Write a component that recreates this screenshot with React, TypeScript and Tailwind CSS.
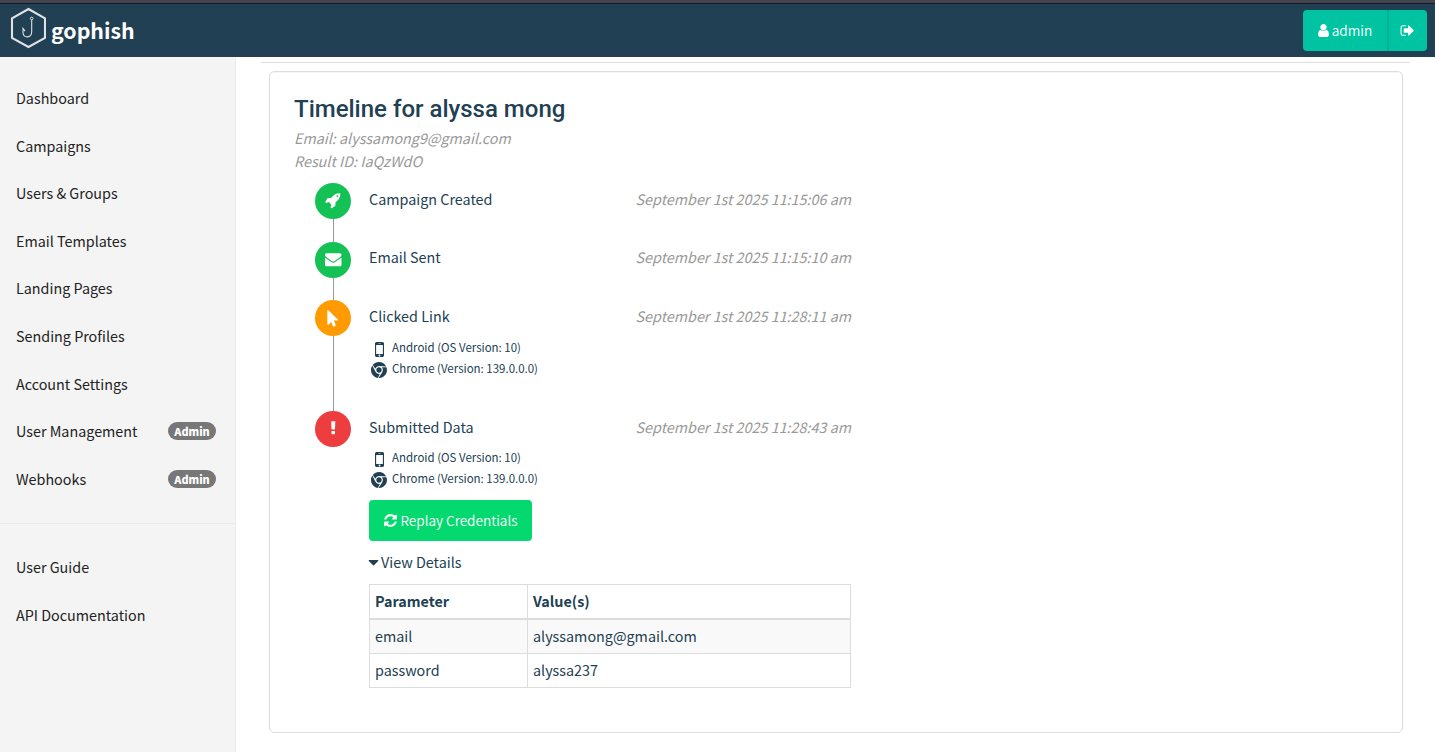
import type { ReactNode } from "react";

const paths = {
  user: "M1536 1399q0 109-62.5 187t-150.5 78h-854q-88 0-150.5-78t-62.5-187q0-85 8.5-160.5t31.5-152 58.5-131 94-89 134.5-34.5q131 128 313 128t313-128q76 0 134.5 34.5t94 89 58.5 131 31.5 152 8.5 160.5zm-256-887q0 159-112.5 271.5t-271.5 112.5-271.5-112.5-112.5-271.5 112.5-271.5 271.5-112.5 271.5 112.5 112.5 271.5z",
  signOut: "M704 1440q0 4 1 20t.5 26.5-3 23.5-10 19.5-20.5 6.5h-320q-119 0-203.5-84.5t-84.5-203.5v-704q0-119 84.5-203.5t203.5-84.5h320q13 0 22.5 9.5t9.5 22.5q0 4 1 20t.5 26.5-3 23.5-10 19.5-20.5 6.5h-320q-66 0-113 47t-47 113v704q0 66 47 113t113 47h312l11.5 1 11.5 3 8 5.5 7 9 2 13.5zm928-544q0 26-19 45l-544 544q-19 19-45 19t-45-19-19-45v-288h-448q-26 0-45-19t-19-45v-384q0-26 19-45t45-19h448v-288q0-26 19-45t45-19 45 19l544 544q19 19 19 45z",
  rocket: "M1440 448q0-40-28-68t-68-28-68 28-28 68 28 68 68 28 68-28 28-68zm224-288q0 249-75.5 430.5t-253.5 360.5q-81 80-195 176l-20 379q-2 16-16 26l-384 224q-7 4-16 4-12 0-23-9l-64-64q-13-14-8-32l85-276-281-281-276 85q-3 1-9 1-14 0-23-9l-64-64q-17-19-5-39l224-384q10-14 26-16l379-20q96-114 176-195 188-187 358-258t431-71q14 0 24 9.5t10 22.5z",
  envelope: "M1792 710v794q0 66-47 113t-113 47h-1472q-66 0-113-47t-47-113v-794q44 49 101 87 362 246 497 345 57 42 92.5 65.5t94.5 48 110 24.5h2q51 0 110-24.5t94.5-48 92.5-65.5q170-123 498-345 57-39 100-87zm0-294q0 79-49 151t-122 123q-376 261-468 325-10 7-42.5 31t-54 38.5-52 32.5-57.5 27-50 9h-2q-23 0-50-9t-57.5-27-52-32.5-54-38.5-42.5-31q-91-64-262-182.5t-205-142.5q-62-42-117-115.5t-55-136.5q0-78 41.5-130t118.5-52h1472q65 0 112.5 47t47.5 113z",
  pointer: "M1389 1043q31 30 14 69-17 40-59 40h-382l201 476q10 25 0 49t-34 35l-177 75q-25 10-49 0t-35-34l-191-452-312 312q-19 19-45 19-12 0-24-5-40-17-40-59v-1504q0-42 40-59 12-5 24-5 27 0 45 19z",
  exclamation: "M1088 1248v224q0 26-19 45t-45 19h-256q-26 0-45-19t-19-45v-224q0-26 19-45t45-19h256q26 0 45 19t19 45zm30-1056l-28 768q-1 26-20.5 45t-45.5 19h-256q-26 0-45.5-19t-20.5-45l-28-768q-1-26 17.5-45t44.5-19h320q26 0 44.5 19t17.5 45z",
  mobile: "M976 1408q0-33-23.5-56.5t-56.5-23.5-56.5 23.5-23.5 56.5 23.5 56.5 56.5 23.5 56.5-23.5 23.5-56.5zm208-160v-704q0-13-9.5-22.5t-22.5-9.5h-512q-13 0-22.5 9.5t-9.5 22.5v704q0 13 9.5 22.5t22.5 9.5h512q13 0 22.5-9.5t9.5-22.5zm-192-848q0-16-16-16h-160q-16 0-16 16t16 16h160q16 0 16-16zm288-16v1024q0 52-38 90t-90 38h-512q-52 0-90-38t-38-90v-1024q0-52 38-90t90-38h512q52 0 90 38t38 90z",
  chrome: "M893 0q240-2 451 120 232 134 352 372l-742-39q-160-9-294 74.5t-185 229.5l-276-424q128-159 311-245.5t383-87.5zm-747 405l337 663q72 143 211 217t293 45l-230 451q-212-33-385-157.5t-272.5-316-99.5-411.5q0-267 146-491zm1580 169q58 150 59.5 310.5t-48.5 306-153 272-246 209.5q-230 133-498 119l405-623q88-131 82.5-290.5t-106.5-277.5zm-830 20q125 0 213.5 88.5t88.5 213.5-88.5 213.5-213.5 88.5-213.5-88.5-88.5-213.5 88.5-213.5 213.5-88.5z",
  refresh: "M1639 1056q0 5-1 7-64 268-268 434.5t-478 166.5q-146 0-282.5-55t-243.5-157l-129 129q-19 19-45 19t-45-19-19-45v-448q0-26 19-45t45-19h448q26 0 45 19t19 45-19 45l-137 137q71 66 161 102t187 36q134 0 250-65t186-179q11-17 53-117 8-23 30-23h192q13 0 22.5 9.5t9.5 22.5zm25-800v448q0 26-19 45t-45 19h-448q-26 0-45-19t-19-45 19-45l138-138q-148-137-349-137-134 0-250 65t-186 179q-11 17-53 117-8 23-30 23h-199q-13 0-22.5-9.5t-9.5-22.5v-7q65-268 270-434.5t480-166.5q146 0 284 55.5t245 156.5l130-129q19-19 45-19t45 19 19 45z",
  caret: "M1408 704q0 26-19 45l-448 448q-19 19-45 19t-45-19l-448-448q-19-19-19-45t19-45 45-19h896q26 0 45 19t19 45z",
};

function Icon({ name, className }: { name: keyof typeof paths; className: string }) {
  return (
    <svg viewBox="0 0 1792 1792" fill="currentColor" className={`shrink-0 overflow-visible ${className}`}>
      <path d={paths[name]} />
    </svg>
  );
}

function Logo() {
  return (
    <svg viewBox="0 0 36 42" className="h-[42px] w-9 shrink-0" fill="none" stroke="#e0e2e4">
      <path d="M18.500 2L35 11.300V30.800L18.500 40L2 30.800V11.300Z" strokeWidth="2.100" />
      <circle cx="21.700" cy="11.400" r="1.300" strokeWidth="1" />
      <path d="M21.700 13V24.500C21.700 31.500 13 31.500 13 25.500V21.500L15 24.200" strokeWidth="1.100" />
    </svg>
  );
}

const nav: { label: string; admin?: boolean }[] = [
  { label: "Dashboard" },
  { label: "Campaigns" },
  { label: "Users & Groups" },
  { label: "Email Templates" },
  { label: "Landing Pages" },
  { label: "Sending Profiles" },
  { label: "Account Settings" },
  { label: "User Management", admin: true },
  { label: "Webhooks", admin: true },
];

function NavItem({ label, admin }: { label: string; admin?: boolean }) {
  return (
    <li className="flex h-[47.6px] items-center justify-between pr-[19px] pl-4">
      <a href="#" className="pb-px">{label}</a>
      {admin && (
        <span className="mt-[0.6px] flex h-[18px] w-12 items-center justify-center rounded-full bg-[#777] text-[10.8px] leading-none font-black text-white">
          Admin
        </span>
      )}
    </li>
  );
}

function Event({
  icon,
  iconClass,
  color,
  title,
  time,
  height,
  rowHeight = "h-[31px]",
  last,
  children,
}: {
  icon: keyof typeof paths;
  iconClass: string;
  color: string;
  title: string;
  time: string;
  height: string;
  rowHeight?: string;
  last?: boolean;
  children?: ReactNode;
}) {
  return (
    <div className={`flex ${height}`}>
      <div className="flex w-9 shrink-0 flex-col items-center">
        <div className={`flex size-9 shrink-0 items-center justify-center rounded-full text-white ${color}`}>
          <Icon name={icon} className={iconClass} />
        </div>
        {!last && <div className="w-px flex-1 bg-[#999]" />}
      </div>
      <div className="ml-[18px] w-[482px]">
        <div className={`flex items-center justify-between ${rowHeight}`}>
          <span>{title}</span>
          <span className="text-[#999] italic">{time}</span>
        </div>
        {children}
      </div>
    </div>
  );
}

function Device() {
  return (
    <div className="pl-[2px] text-[11.47px] leading-[21px]">
      <div className="flex h-[21px] items-center">
        <Icon name="mobile" className="-my-px mt-[2px] -ml-[2px] size-[21px]" />
        <span className="ml-[2px]">Android (OS Version: 10)</span>
      </div>
      <div className="flex h-[21px] items-center gap-[5px]">
        <Icon name="chrome" className="mt-[2px] size-4" />
        <span>Chrome (Version: 139.0.0.0)</span>
      </div>
    </div>
  );
}

export default function App() {
  return (
    <div className="flex h-[752px] w-full flex-col overflow-hidden bg-white font-['Noto_Sans_CJK_SC',sans-serif] text-[14.35px] leading-[23px] text-[#214053]">
      <div className="h-1 shrink-0 border-b border-[#111820] bg-[#44454e]" />
      <header className="flex h-[53px] shrink-0 items-start justify-between bg-[#214053] pr-2 pl-[10px]">
        <a href="#" className="flex pt-[3px] text-white">
          <Logo />
          <span className="mt-2 ml-[5px] text-[21.3px] leading-[30px] font-bold">gophish</span>
        </a>
        <div className="mt-[6px] flex h-[41px] overflow-hidden rounded-[4px] bg-[#00c4a1] text-[13.7px] font-[350] text-white">
          <button className="flex w-[86px] items-center justify-center gap-px border-r-2 border-[#00b193] pr-[2px]">
            <Icon name="user" className="size-[15px]" />
            <span>admin</span>
          </button>
          <button className="flex w-[38px] items-center justify-center pr-px">
            <Icon name="signOut" className="size-[15px]" />
          </button>
        </div>
      </header>
      <div className="flex min-h-0 flex-1">
        <aside className="w-[236px] shrink-0 border-r border-[#ebebeb] bg-[#f4f4f4] pt-[17.200px] text-[#222]">
          <ul>
            {nav.map((item) => (
              <NavItem key={item.label} {...item} />
            ))}
          </ul>
          <hr className="mt-[20.400px] mb-[19.200px] border-[#ebebeb]" />
          <ul>
            <NavItem label="User Guide" />
            <NavItem label="API Documentation" />
          </ul>
        </aside>
        <main className="flex-1 pt-[5px] pr-[25px] pl-[25px]">
          <hr className="border-[#ddd]" />
          <section className="mt-2 mr-[7px] ml-2 h-[662px] rounded-[5px] border border-[#ddd] pt-[21px] pl-6 shadow-[inset_0_1px_1px_rgba(0,0,0,0.04)]">
            <h3 className="font-[Roboto] text-[24px] leading-8 font-medium text-[#214053]">Timeline for alyssa mong</h3>
            <p className="mt-px text-[#999] italic">Email: alyssamong9@gmail.com</p>
            <p className="text-[#999] italic">Result ID: IaQzWdO</p>
            <div className="mt-[11px] ml-[21px]">
              <Event icon="rocket" iconClass="size-[16.500px] mb-px" color="bg-[#14c155]" title="Campaign Created" time="September 1st 2025 11:15:06 am" height="h-[59px]" />
              <Event icon="envelope" iconClass="size-[16.500px] mb-px" color="bg-[#14c155]" title="Email Sent" time="September 1st 2025 11:15:10 am" height="h-[58px]" rowHeight="h-[29px]" />
              <Event icon="pointer" iconClass="size-[16.500px]" color="bg-[#ff9a00]" title="Clicked Link" time="September 1st 2025 11:28:11 am" height="h-[111px]">
                <div className="mt-[6px]">
                  <Device />
                </div>
              </Event>
              <Event icon="exclamation" iconClass="size-[16.500px] mb-px" color="bg-[#ee3d3e]" title="Submitted Data" time="September 1st 2025 11:28:43 am" height="h-auto" last>
                <div className="mt-[5px]">
                  <Device />
                </div>
                <button className="mt-[11px] flex h-[41px] w-[163px] items-center justify-center gap-[2px] rounded-[4px] bg-[#03d96f] text-[13.6px] font-[350] text-white">
                  <Icon name="refresh" className="size-[15px]" />
                  <span>Replay Credentials</span>
                </button>
                <div className="mt-[9px] flex items-center">
                  <Icon name="caret" className="mt-px -ml-1 size-[17px]" />
                  <span className="-ml-px">View Details</span>
                </div>
                <table className="mt-[11px] w-[482px] table-fixed border-collapse text-left [&_td]:border [&_td]:border-[#ddd] [&_td]:px-[5px] [&_td]:pb-[2px] [&_th]:border [&_th]:border-[#ddd] [&_th]:px-[5px] [&_th]:pb-[2px]">
                  <thead>
                    <tr className="h-[34px]">
                      <th className="w-[158px] border-b-2!">Parameter</th>
                      <th className="border-b-2!">Value(s)</th>
                    </tr>
                  </thead>
                  <tbody>
                    <tr className="h-[35px] bg-[#f9f9f9]">
                      <td>email</td>
                      <td>alyssamong@gmail.com</td>
                    </tr>
                    <tr className="h-[34px]">
                      <td>password</td>
                      <td>alyssa237</td>
                    </tr>
                  </tbody>
                </table>
              </Event>
            </div>
          </section>
        </main>
      </div>
    </div>
  );
}
